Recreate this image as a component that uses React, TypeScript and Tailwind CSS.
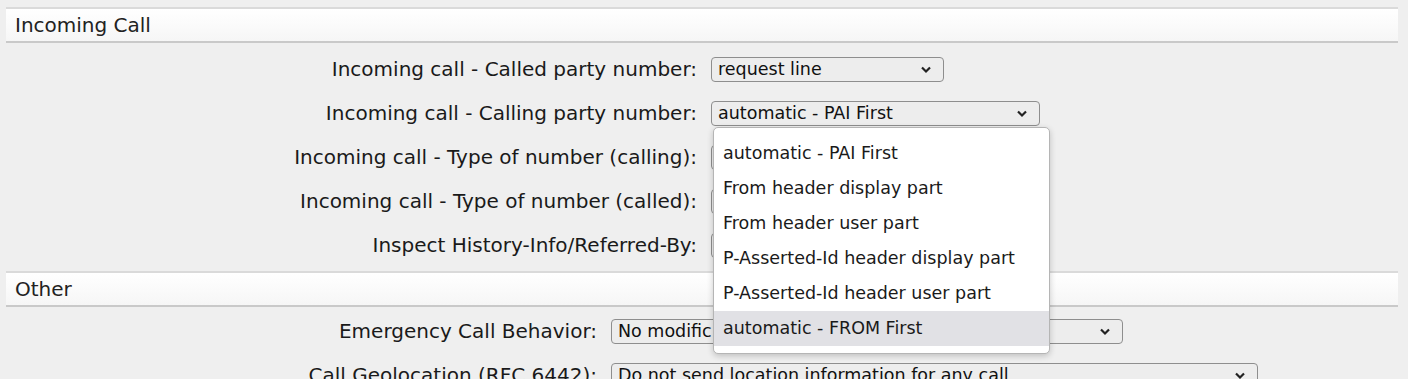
import React from "react";

const font = { fontFamily: '"DejaVu Sans", Verdana, sans-serif' };

function Chevron() {
  return (
    <svg width="12" height="9" viewBox="0 0 12 9" className="shrink-0">
      <path d="M2 2.5 L6 6.5 L10 2.5" fill="none" stroke="#222" strokeWidth="2.2" />
    </svg>
  );
}

function Select({ text, w }: { text: string; w: string }) {
  return (
    <div
      className={`${w} h-[25px] flex items-center justify-between pl-[6px] pr-[11px] border border-[#8e8e8e] rounded-[4px] bg-[#ededed] text-[17.5px] leading-none text-[#111] overflow-hidden whitespace-nowrap`}
    >
      <span className="overflow-hidden pt-[2px]">{text}</span>
      <Chevron />
    </div>
  );
}

function Header({ title }: { title: string }) {
  return (
    <div className="h-[36px] flex items-center pl-[9px] border-t-2 border-b-2 border-t-[#dadada] border-b-[#c9c9c9] bg-gradient-to-b from-white to-[#f6f6f6] text-[20px] text-[#222]">
      {title}
    </div>
  );
}

function Row({ label, labelW, children }: { label: string; labelW: string; children: React.ReactNode }) {
  return (
    <div className="h-[44px] flex items-center gap-[14px]">
      <div className={`${labelW} text-right text-[20px] text-[#1a1a1a] whitespace-nowrap`}>{label}</div>
      {children}
    </div>
  );
}

export default function App() {
  const items = [
    "automatic - PAI First",
    "From header display part",
    "From header user part",
    "P-Asserted-Id header display part",
    "P-Asserted-Id header user part",
    "automatic - FROM First",
  ];
  return (
    <div className="relative w-[1408px] h-[379px] overflow-hidden bg-[#efefef] pt-[7px] px-[6px] pr-[10px]" style={font}>
      <Header title="Incoming Call" />
      <div className="pt-[4px]">
        <Row label="Incoming call - Called party number:" labelW="w-[691px]">
          <Select text="request line" w="w-[233px]" />
        </Row>
        <Row label="Incoming call - Calling party number:" labelW="w-[691px]">
          <Select text="automatic - PAI First" w="w-[329px]" />
        </Row>
        <Row label="Incoming call - Type of number (calling):" labelW="w-[691px]">
          <Select text="" w="w-[300px]" />
        </Row>
        <Row label="Incoming call - Type of number (called):" labelW="w-[691px]">
          <Select text="" w="w-[300px]" />
        </Row>
        <Row label="Inspect History-Info/Referred-By:" labelW="w-[691px]">
          <Select text="" w="w-[300px]" />
        </Row>
      </div>
      <div className="pt-[4px]">
        <Header title="Other" />
      </div>
      <div className="pt-[2px]">
        <Row label="Emergency Call Behavior:" labelW="w-[591px]">
          <Select text="No modific" w="w-[512px]" />
        </Row>
        <Row label="Call Geolocation (RFC 6442):" labelW="w-[591px]">
          <Select text="Do not send location information for any call" w="w-[647px]" />
        </Row>
      </div>

      <div className="absolute left-[713px] top-[127px] w-[337px] h-[227px] bg-white border border-[#b5b5b5] rounded-[5px] shadow-[0_2px_6px_rgba(0,0,0,0.2)] pt-[8px] text-[17.5px] text-[#1a1a1a]">
        {items.map((it, i) => (
          <div
            key={it}
            className={`h-[35px] flex items-center pl-[9px] whitespace-nowrap ${i === items.length - 1 ? "bg-[#e1e1e5]" : ""}`}
          >
            {it}
          </div>
        ))}
      </div>
    </div>
  );
}
